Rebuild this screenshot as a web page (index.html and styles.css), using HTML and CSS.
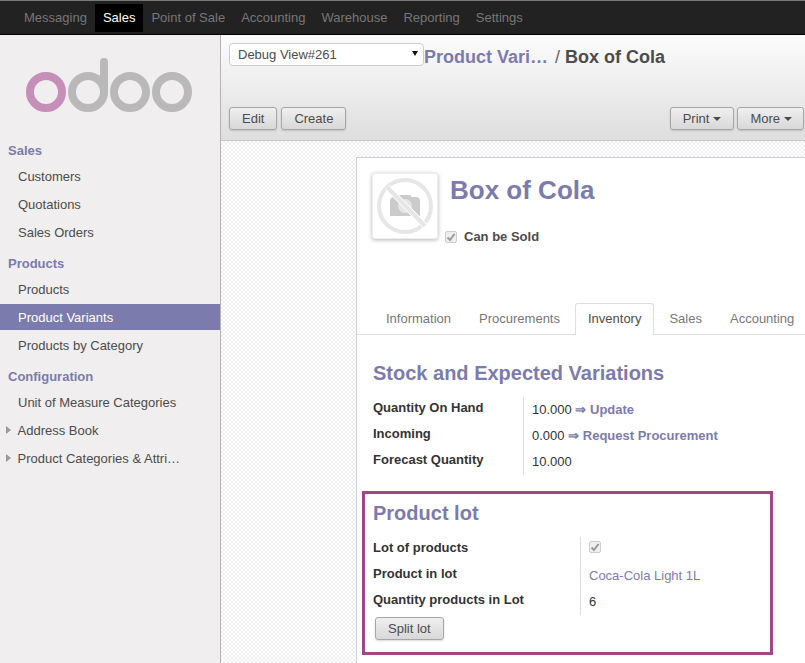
FILE: index.html
```html
<!DOCTYPE html>
<html lang="en">
<head>
<meta charset="utf-8">
<title>Box of Cola</title>
<link rel="stylesheet" href="styles.css">
</head>
<body>
<div class="app">
  <nav class="topbar">
    <a class="nav-item">Messaging</a>
    <a class="nav-item active">Sales</a>
    <a class="nav-item">Point of Sale</a>
    <a class="nav-item">Accounting</a>
    <a class="nav-item">Warehouse</a>
    <a class="nav-item">Reporting</a>
    <a class="nav-item">Settings</a>
  </nav>
  <div class="body">
    <aside class="sidebar">
      <div class="logo">
        <svg width="220" height="98" viewBox="0 35 220 98" fill="none" stroke-width="8">
          <circle cx="46" cy="92" r="16" stroke="#c58fb8"/>
          <circle cx="88" cy="92" r="16" stroke="#b9b9b9"/>
          <path d="M104 92V62" stroke="#b9b9b9" stroke-linecap="round"/>
          <circle cx="130" cy="92" r="16" stroke="#b9b9b9"/>
          <circle cx="172" cy="92" r="16" stroke="#b9b9b9"/>
        </svg>
      </div>
      <h4 class="menu-head">Sales</h4>
      <a class="menu-item">Customers</a>
      <a class="menu-item">Quotations</a>
      <a class="menu-item">Sales Orders</a>
      <h4 class="menu-head">Products</h4>
      <a class="menu-item">Products</a>
      <a class="menu-item selected">Product Variants</a>
      <a class="menu-item">Products by Category</a>
      <h4 class="menu-head">Configuration</h4>
      <a class="menu-item">Unit of Measure Categories</a>
      <a class="menu-item expandable">Address Book</a>
      <a class="menu-item expandable">Product Categories &amp; Attri…</a>
    </aside>
    <main class="main">
      <header class="cp">
        <div class="cp-top">
          <div class="debug-wrap">
            <select class="debug"><option>Debug View#261</option></select>
          </div>
          <h2 class="crumbs"><a class="crumb-link">Product Vari…</a> <span class="crumb-sep">/</span> Box of Cola</h2>
        </div>
        <div class="cp-actions">
          <div class="btn-group">
            <button class="btn">Edit</button>
            <button class="btn">Create</button>
          </div>
          <div class="btn-group">
            <button class="btn">Print<span class="caret"></span></button>
            <button class="btn btn-more">More<span class="caret"></span></button>
          </div>
        </div>
      </header>
      <div class="canvas">
        <div class="sheet">
          <div class="head">
            <div class="photo">
              <svg width="64" height="64" viewBox="0 0 64 64">
                <path d="M17 27q0-4 4-4h4l2-2h10l2 2h4q4 0 4 4v15H17z" fill="#cbcbcb"/>
                <circle cx="32" cy="32" r="7" fill="#e6e6e6"/>
                <circle cx="32" cy="32" r="26" fill="none" stroke="#e6e6e6" stroke-width="4"/>
                <path d="M14 13l38 39" stroke="#fff" stroke-width="6"/>
                <path d="M14 13l38 39" stroke="#e6e6e6" stroke-width="4"/>
              </svg>
            </div>
            <div class="head-main">
              <h1 class="name">Box of Cola</h1>
              <div class="sold">
                <span class="check"><svg width="10" height="10" viewBox="0 0 10 10"><path d="M1.500 5.500l2.500 2.500 4.500-6" fill="none" stroke="#999" stroke-width="2"/></svg></span>
                <strong>Can be Sold</strong>
              </div>
            </div>
          </div>
          <ul class="tabs">
            <li class="tab">Information</li>
            <li class="tab">Procurements</li>
            <li class="tab current">Inventory</li>
            <li class="tab">Sales</li>
            <li class="tab">Accounting</li>
          </ul>
          <section class="stock">
            <h3 class="section-title">Stock and Expected Variations</h3>
            <div class="fields fields-stock">
              <div class="labels">
                <label>Quantity On Hand</label>
                <label>Incoming</label>
                <label>Forecast Quantity</label>
              </div>
              <div class="values">
                <div>10.000 <a class="action">⇒ Update</a></div>
                <div>0.000 <a class="action">⇒ Request Procurement</a></div>
                <div>10.000</div>
              </div>
            </div>
          </section>
          <section class="lot">
            <h3 class="section-title">Product lot</h3>
            <div class="fields fields-lot">
              <div class="labels">
                <label>Lot of products</label>
                <label>Product in lot</label>
                <label>Quantity products in Lot</label>
              </div>
              <div class="values">
                <div class="check-row"><span class="check"><svg width="10" height="10" viewBox="0 0 10 10"><path d="M1.500 5.500l2.500 2.500 4.500-6" fill="none" stroke="#999" stroke-width="2"/></svg></span></div>
                <div><a class="link">Coca-Cola Light 1L</a></div>
                <div>6</div>
              </div>
            </div>
            <button class="btn split">Split lot</button>
          </section>
        </div>
      </div>
    </main>
  </div>
</div>
</body>
</html>
```

FILE: styles.css
```css
* { box-sizing: border-box; }
html, body { margin: 0; padding: 0; height: 100%; overflow: hidden; }
body { font: 13px/15px "Liberation Sans", Arial, sans-serif; color: #4c4c4c; }
h1, h2, h3, h4, ul { margin: 0; padding: 0; }
.app { width: 805px; height: 663px; display: flex; flex-direction: column; overflow: hidden; }

.topbar {
  height: 35px; flex: none; display: flex; padding: 3px 0 2px 16px;
  background: #222; border-top: 1px solid #777; border-bottom: 1px solid #000;
}
.nav-item { padding: 0 8px; height: 28px; line-height: 27px; color: #777; }
.nav-item.active { background: #000; color: #fff; }

.body { flex: 1; display: flex; min-height: 0; }
.sidebar { width: 221px; flex: none; background: #f0eeee; border-right: 1px solid #b3b3b3; }
.logo { height: 99px; }
.logo svg { display: block; }
.menu-head { padding: 9px 0 3px 8px; font-size: 13px; line-height: 15px; color: #7c7bad; font-weight: bold; }
.menu-item { display: block; height: 26px; margin: 2px 0; padding-left: 18px; line-height: 28px; color: #4c4c4c; position: relative; }
.menu-item.selected { background: #7c7bad; color: #fff; }
.menu-item.expandable { padding-left: 17.500px; }
.menu-item.expandable::before {
  content: ""; position: absolute; left: 6px; top: 9px;
  border-left: 5px solid #999; border-top: 4px solid transparent; border-bottom: 4px solid transparent;
}

.main { flex: 1; min-width: 0; display: flex; flex-direction: column; }
.cp {
  height: 106px; flex: none; padding: 8px 8px 0; border-bottom: 1px solid #cacaca;
  background: linear-gradient(#fcfcfc, #dedede);
}
.cp-top { display: flex; height: 64px; }
.debug-wrap { position: relative; width: 195px; height: 23px; }
.debug-wrap::after {
  content: ""; position: absolute; right: 6px; top: 8px; pointer-events: none;
  border-top: 5px solid #111; border-left: 3px solid transparent; border-right: 3px solid transparent;
}
.debug {
  display: block; width: 195px; height: 23px; padding: 0 8px; appearance: none;
  font: 13px "Liberation Sans", Arial, sans-serif; color: #4c4c4c;
  background: #fff; border: 1px solid #ccc; border-radius: 4px;
}
.crumbs { font-size: 18px; line-height: 28px; font-weight: bold; color: #4c4c4c; white-space: nowrap; }
.crumb-link { color: #7c7bad; margin-right: 2px; }
.crumb-sep { font-weight: normal; color: #666; }
.cp-actions { display: flex; justify-content: space-between; margin-right: -7px; }
.btn-group { display: flex; gap: 4px; }
.btn-group + .btn-group { gap: 3px; }
.btn {
  height: 23px; padding: 0 12px; font: 13px/20px "Liberation Sans", Arial, sans-serif; color: #4c4c4c;
  background: linear-gradient(#efefef, #d8d8d8); border: 1px solid #a6a6a6; border-radius: 3px;
  box-shadow: 0 1px 2px rgba(0,0,0,.15);
}
.btn-more { padding-right: 11px; }
.caret {
  display: inline-block; margin-left: 4px; vertical-align: 2px;
  border-top: 4px solid #4c4c4c; border-left: 4px solid transparent; border-right: 4px solid transparent;
}

.canvas {
  flex: 1; min-height: 0; overflow: hidden; padding: 16px 0 0 135px;
  background-color: #fff;
  background-image: repeating-conic-gradient(#f0f0f0 0 25%, #ffffff 0 50%);
  background-size: 4px 4px;
}
.sheet { width: 520px; height: 600px; background: #fff; border: 1px solid #d0d0d8; border-right: 0; }

.head { display: flex; height: 135px; padding: 15px 0 0 15px; }
.photo {
  width: 66px; height: 66px; flex: none; background: #fff; border: 1px solid #eee; border-radius: 3px;
  box-shadow: 0 1px 4px rgba(0,0,0,.3);
}
.photo svg { display: block; }
.head-main { padding-left: 7px; }
.name { margin: 2px 0 0 5px; font-size: 26px; line-height: 30px; color: #7c7bad; font-weight: bold; }
.sold { display: flex; align-items: center; gap: 7px; margin-top: 24px; }
.sold strong { color: #4c4c4c; }
.check {
  display: inline-flex; align-items: center; justify-content: center; width: 12px; height: 12px;
  background: #eee; border: 1px solid #ccc; border-radius: 2px;
}

.tabs { display: flex; height: 42px; list-style: none; padding: 10px 0 0 15px; border-bottom: 1px solid #ddd; }
.tab { height: 32px; padding: 7px 13px 0; border: 1px solid transparent; border-bottom: 0; color: #777; white-space: nowrap; }
.tab.current { margin: 0 1px; padding: 7px 12px 0; background: #fff; border-color: #ddd; border-radius: 3px 3px 0 0; color: #4c4c4c; }

.section-title { font-size: 20px; line-height: 24px; color: #7c7bad; font-weight: bold; }
.stock { padding: 26px 0 0 16px; }
.fields { display: flex; }
.labels { display: flex; flex-direction: column; gap: 11px; padding-top: 3px; }
.labels label { display: block; font-weight: bold; color: #333; }
.values { display: flex; flex-direction: column; gap: 11px; padding: 5px 0 0 8px; border-left: 1px solid #ddd; height: 78px; color: #333; }
.fields-stock { margin-top: 12px; }
.fields-stock .labels { width: 150px; }
.action, .link { color: #7c7bad; }
.action { font-weight: bold; }

.lot {
  width: 411px; height: 164px; margin: 16px 0 0 5px; padding: 7px 0 0 8px;
  border: 3px solid #a24689;
}
.fields-lot { margin-top: 12px; }
.fields-lot .labels { width: 207px; }
.check-row { height: 15px; display: flex; align-items: flex-start; margin-top: -1px; margin-bottom: 1px; }
.split { display: block; margin: 2px 0 0 2px; }
```
